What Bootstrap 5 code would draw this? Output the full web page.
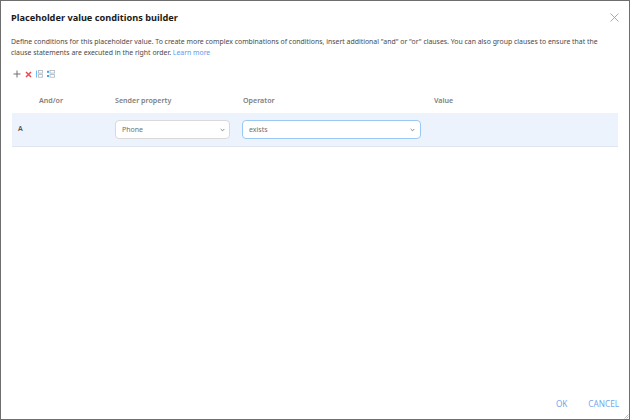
<!DOCTYPE html>
<html lang="en">
<head>
<meta charset="utf-8">
<title>Placeholder value conditions builder</title>
<link href="https://cdn.jsdelivr.net/npm/bootstrap@5.3.0/dist/css/bootstrap.min.css" rel="stylesheet">
<style>
html,body{height:100%;margin:0;background:#fff}
body{font-family:"Noto Sans","Open Sans","Liberation Sans",sans-serif;font-size:7px;color:#333}
.dlg-win{width:630px;height:420px;border:1px solid #6e6e6e;position:relative;overflow:hidden}
.dlg-head{padding:10px 10px 0 10px;height:35px}
.dlg-title{font-size:9.2px;font-weight:700;color:#1a1a1a;line-height:14px;margin:0}
.dlg-close{width:11px;height:11px;margin-right:-1px;margin-top:1px;padding:0;border:0;background:none;line-height:0}
.dlg-desc{padding:0 10px;line-height:11px;font-size:6.9px;color:#4a4a4a;margin:0;height:24px}
.dlg-desc a{color:#5a9bf0;text-decoration:none}
.dlg-tools{padding:0 12px;height:14px;margin-top:7px;margin-bottom:8px;gap:4px}
.dlg-tools svg{display:block}
.cond-grid{margin-left:11px;margin-right:11px;display:grid;grid-template-columns:103px 127px 191px 1fr}
.cond-hd{font-weight:600;color:#808080;height:24px;line-height:23px;font-size:7.1px}
.cond-hd-op,.cond-hd-val{padding-left:1px}
.cond-hd-first{padding-left:27px}
.cond-row{background:#ecf3fc;border-bottom:1px solid #dfe6ef;height:34px;display:flex;align-items:center}
.cond-a{padding-left:6px;color:#555;font-weight:600}
.cond-sel{height:19px;background:#fff;border:1px solid #d9d9d9;border-radius:4px;padding:1px 4px 0 6px;color:#707070;font-size:7px;display:flex;align-items:center;justify-content:space-between}
.sel-a{width:115px}
.sel-b{width:179px;border-color:#9ac8f4;padding-right:5px}
.dlg-foot{position:absolute;right:10px;bottom:9px;gap:21px}
.dlg-foot a{color:#74a6f0;font-size:8.2px;text-decoration:none;line-height:12px}
.grip{position:absolute;right:0;bottom:0;line-height:0}
</style>
</head>
<body>
<div class="dlg-win d-flex flex-column">
  <div class="dlg-head d-flex justify-content-between align-items-start">
    <h1 class="dlg-title">Placeholder value conditions builder</h1>
    <button class="dlg-close" aria-label="Close"><svg width="9" height="9" viewBox="0 0 9 9"><path d="M.5.5l8 8M8.5.5l-8 8" stroke="#a0a0a0" stroke-width=".9" fill="none"/></svg></button>
  </div>
  <p class="dlg-desc">Define conditions for this placeholder value. To create more complex combinations of conditions, insert additional "and" or "or" clauses. You can also group clauses to ensure that the clause statements are executed in the right order. <a href="#">Learn more</a></p>
  <div class="dlg-tools d-flex align-items-center">
    <svg width="8" height="8" viewBox="0 0 8 8"><path d="M4 .5v7M.5 4h7" stroke="#707070" stroke-width="1" fill="none"/></svg>
    <svg width="7" height="7" viewBox="0 0 7 7"><path d="M1 1l5 5M6 1l-5 5" stroke="#f0484e" stroke-width="1.5" fill="none"/></svg>
    <svg width="7" height="8" viewBox="0 0 7 8"><path d="M.5.5v7" stroke="#6fbcf0" stroke-width="1" fill="none"/><rect x="2.5" y=".5" width="4" height="2.6" fill="none" stroke="#aab4bd" stroke-width=".8"/><rect x="2.5" y="4.6" width="4" height="2.6" fill="none" stroke="#aab4bd" stroke-width=".8"/></svg>
    <svg width="8" height="8" viewBox="0 0 8 8"><rect x="0" y=".8" width="2" height="2" fill="#3aa6ec"/><rect x="0" y="5" width="2" height="2" fill="#3aa6ec"/><rect x="3" y=".5" width="4.5" height="2.6" fill="none" stroke="#aab4bd" stroke-width=".8"/><rect x="3" y="4.6" width="4.5" height="2.6" fill="none" stroke="#aab4bd" stroke-width=".8"/></svg>
  </div>
  <div class="cond-grid">
    <div class="cond-hd cond-hd-first">And/or</div>
    <div class="cond-hd">Sender property</div>
    <div class="cond-hd cond-hd-op">Operator</div>
    <div class="cond-hd cond-hd-val">Value</div>
    <div class="cond-row cond-a">A</div>
    <div class="cond-row"><div class="cond-sel sel-a"><span>Phone</span><svg width="5" height="4" viewBox="0 0 5 4"><path d="M.7 1l1.8 1.8L4.3 1" stroke="#777" fill="none" stroke-width=".9"/></svg></div></div>
    <div class="cond-row"><div class="cond-sel sel-b"><span>exists</span><svg width="5" height="4" viewBox="0 0 5 4"><path d="M.7 1l1.8 1.8L4.3 1" stroke="#777" fill="none" stroke-width=".9"/></svg></div></div>
    <div class="cond-row"></div>
  </div>
  <div class="dlg-foot d-flex">
    <a href="#">OK</a>
    <a href="#">CANCEL</a>
  </div>
  <div class="grip"><svg width="6" height="6" viewBox="0 0 6 6"><path d="M5.5 1.5l-4 4M5.5 3.5l-2 2" stroke="#aaa" stroke-width=".8" fill="none"/></svg></div>
</div>
<script src="https://cdn.jsdelivr.net/npm/bootstrap@5.3.0/dist/js/bootstrap.bundle.min.js"></script>
</body>
</html>
